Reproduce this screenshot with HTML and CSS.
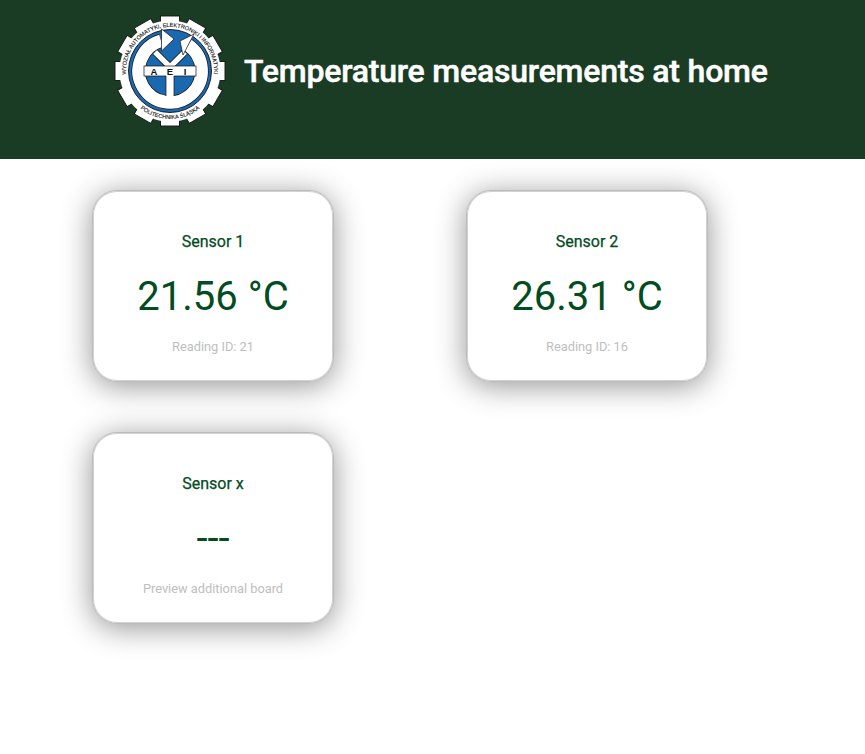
FILE: index.html
```html
<!DOCTYPE html>
<html lang="en">
<head>
<meta charset="utf-8">
<title>Temperature measurements at home</title>
<link rel="stylesheet" href="styles.css">
</head>
<body>
<header class="topbar">
  <svg class="logo" viewBox="0 0 112 112" width="112" height="112" role="img" aria-label="AEI logo">
    <defs>
      <path id="arcTop" d="M 13.7 68 A 44 44 0 1 1 98.3 68"/>
      <path id="arcBottom" d="M 23.2 91 A 48 48 0 0 0 88.8 91"/>
    </defs>
    <g fill="#fff" stroke="#111" stroke-width="0.9">
      <rect x="46.5" y="1" width="19" height="10"/>
      <rect x="46.5" y="1" width="19" height="10" transform="rotate(30 56 56)"/>
      <rect x="46.5" y="1" width="19" height="10" transform="rotate(60 56 56)"/>
      <rect x="46.5" y="1" width="19" height="10" transform="rotate(90 56 56)"/>
      <rect x="46.5" y="1" width="19" height="10" transform="rotate(120 56 56)"/>
      <rect x="46.5" y="1" width="19" height="10" transform="rotate(150 56 56)"/>
      <rect x="46.5" y="1" width="19" height="10" transform="rotate(180 56 56)"/>
      <rect x="46.5" y="1" width="19" height="10" transform="rotate(210 56 56)"/>
      <rect x="46.5" y="1" width="19" height="10" transform="rotate(240 56 56)"/>
      <rect x="46.5" y="1" width="19" height="10" transform="rotate(270 56 56)"/>
      <rect x="46.5" y="1" width="19" height="10" transform="rotate(300 56 56)"/>
      <rect x="46.5" y="1" width="19" height="10" transform="rotate(330 56 56)"/>
    </g>
    <circle cx="56" cy="56" r="50.5" fill="#fff"/>
    <text class="logo-text"><textPath href="#arcTop" startOffset="50%" text-anchor="middle">WYDZIAŁ AUTOMATYKI, ELEKTRONIKI I INFORMATYKI</textPath></text>
    <text class="logo-text"><textPath href="#arcBottom" startOffset="50%" text-anchor="middle">POLITECHNIKA ŚLĄSKA</textPath></text>
    <circle cx="56" cy="56" r="41.5" fill="#1a69b0" stroke="#111" stroke-width="0.9"/>
    <path d="M 41 37 L 56 52 L 71 37" fill="none" stroke="#111" stroke-width="7"/>
    <path d="M 41 37 L 56 52 L 71 37" fill="none" stroke="#fff" stroke-width="5.4"/>
    <path d="M 47 25.8 A 31.5 31.5 0 1 0 74 30" fill="none" stroke="#111" stroke-width="14"/>
    <path d="M 47 25.8 A 31.5 31.5 0 1 0 74 30" fill="none" stroke="#fff" stroke-width="12.6"/>
    <path d="M 47.5 14 L 60 24 L 47.5 36 Z" fill="#fff" stroke="#111" stroke-width="0.7"/>
    <path d="M 80 19 L 66 26 L 69 40 Z" fill="#fff" stroke="#111" stroke-width="0.7"/>
    <rect x="30" y="51" width="52" height="10" fill="#fff" stroke="#111" stroke-width="0.7"/>
    <rect x="52" y="60" width="8" height="24" fill="#fff"/>
    <path d="M52 61V81M60 61V81" stroke="#111" stroke-width="0.7"/>
    <text class="logo-aei" x="40" y="60">A</text>
    <text class="logo-aei" x="56" y="60">E</text>
    <text class="logo-aei" x="71" y="60">I</text>
  </svg>
  <h1 class="title">Temperature measurements at home</h1>
</header>
<main class="cards">
  <section class="card">
    <h2 class="card-name">Sensor 1</h2>
    <p class="card-value">21.56 °C</p>
    <p class="card-note">Reading ID: 21</p>
  </section>
  <section class="card">
    <h2 class="card-name">Sensor 2</h2>
    <p class="card-value">26.31 °C</p>
    <p class="card-note">Reading ID: 16</p>
  </section>
  <section class="card">
    <h2 class="card-name">Sensor x</h2>
    <p class="card-value">---</p>
    <p class="card-note">Preview additional board</p>
  </section>
</main>
</body>
</html>
```
FILE: styles.css
```css
html, body {
  margin: 0;
  padding: 0;
  min-height: 100vh;
  background: #fff;
  font-family: Roboto, "Liberation Sans", sans-serif;
}

.topbar {
  height: 159px;
  background: #1b3c24;
  display: flex;
  align-items: flex-start;
  padding-left: 114px;
  box-sizing: border-box;
  gap: 18px;
}

.logo {
  margin-top: 15px;
  flex: none;
}

.logo-text {
  font-family: "Liberation Sans", sans-serif;
  font-size: 5.6px;
  fill: #111;
  stroke: #111;
  stroke-width: 0.12px;
}

.logo-aei {
  font-family: "Liberation Sans", sans-serif;
  font-size: 9.5px;
  font-weight: 700;
  fill: #111;
  text-anchor: middle;
}

.title {
  margin: 52px 0 0;
  color: #fff;
  font-size: 32px;
  line-height: 38px;
  font-weight: 500;
  letter-spacing: -0.2px;
  -webkit-text-stroke: 0.5px #fff;
  white-space: nowrap;
}

.cards {
  display: grid;
  grid-template-columns: repeat(2, 242px);
  column-gap: 132px;
  row-gap: 50px;
  padding: 31px 0 60px 92px;
}

.card {
  box-sizing: border-box;
  height: 192px;
  background: #fff;
  border: 1px solid #bcbcbc;
  border-radius: 25px;
  box-shadow: inset 0 0 0 1px #d2d2d2, 0 4px 30px rgba(0, 0, 0, 0.42);
  text-align: center;
  padding-top: 41px;
}

.card-name {
  margin: 0;
  color: #034c22;
  font-size: 16px;
  line-height: 19px;
  font-weight: 400;
  -webkit-text-stroke: 0.25px #034c22;
}

.card-value {
  margin: 22px 0 0;
  color: #034c22;
  font-size: 40px;
  line-height: 47px;
  font-weight: 400;
}

.card-note {
  margin: 19px 0 0;
  color: #bebebe;
  font-size: 12.8px;
  line-height: 15px;
}
```
